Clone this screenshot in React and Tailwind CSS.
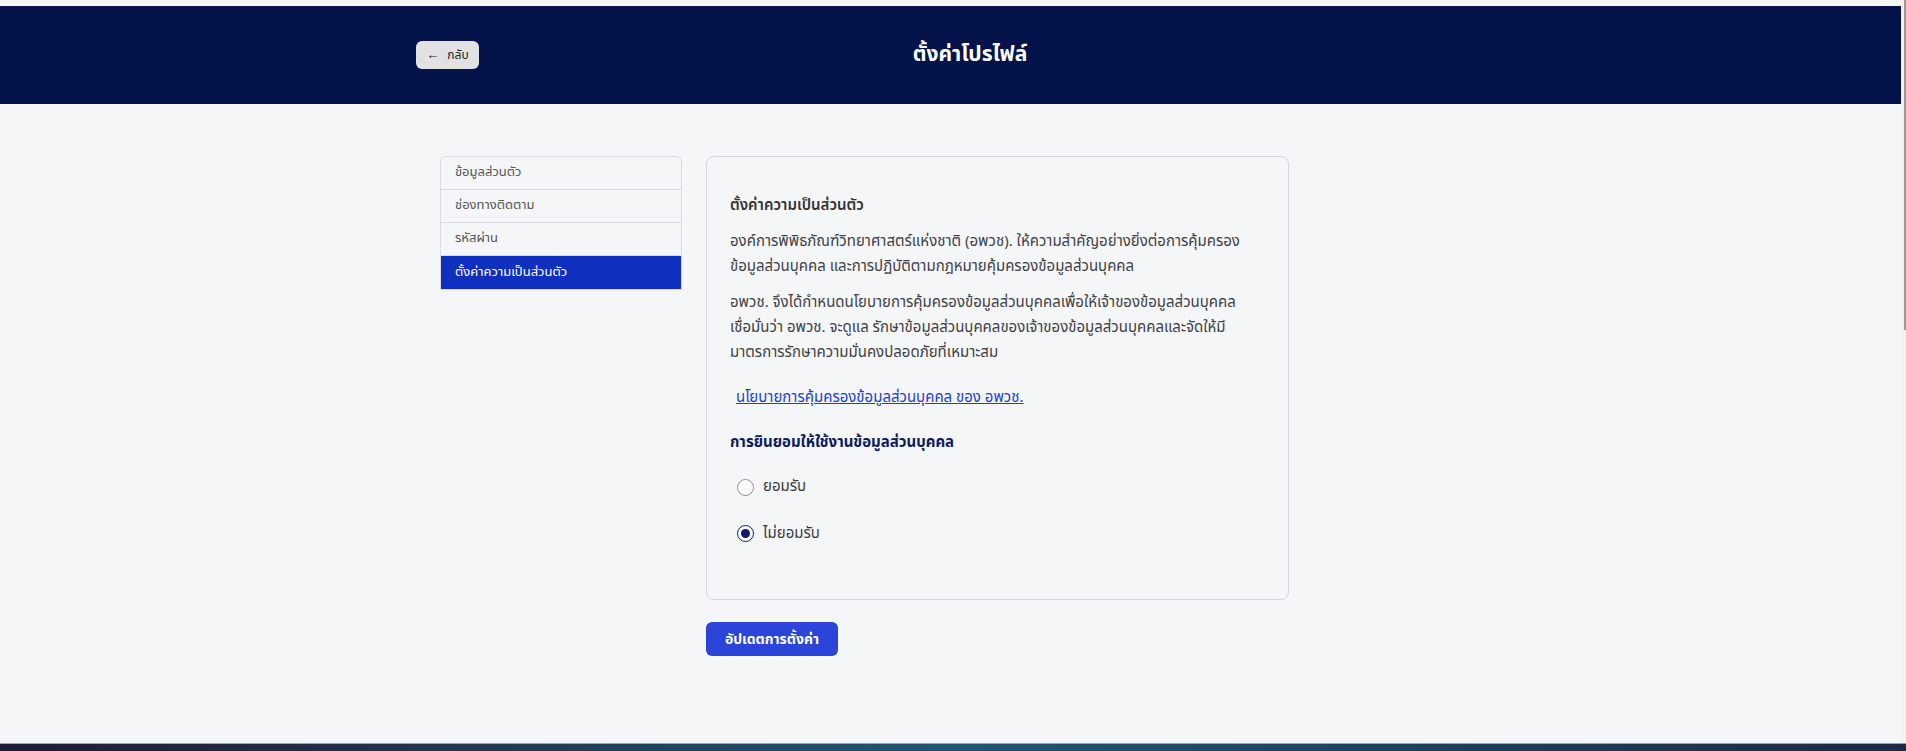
import React, { useState } from 'react';

const menuItems = [
  'ข้อมูลส่วนตัว',
  'ช่องทางติดตาม',
  'รหัสผ่าน',
  'ตั้งค่าความเป็นส่วนตัว',
];

const RadioOption = ({ label, checked, onChange }) => (
  <label className="flex items-center gap-[9px] pl-[7px] cursor-pointer">
    <span
      className={
        checked
          ? 'w-[17px] h-[17px] rounded-full border-[1.5px] border-[#0b1b6e] bg-white flex items-center justify-center'
          : 'w-[17px] h-[17px] rounded-full border border-[#8a8f99] bg-white'
      }
      onClick={onChange}
    >
      {checked && <span className="w-[9px] h-[9px] rounded-full bg-[#0b1b6e]" />}
    </span>
    <span className="text-[15px] text-[#3a3a40]" onClick={onChange}>{label}</span>
  </label>
);

const App = () => {
  const [active] = useState(3);
  const [consent, setConsent] = useState('no');

  return (
    <div className="h-[751px] flex flex-col bg-[#f5f6f8] font-['Noto_Sans_Thai','Noto_Sans',sans-serif] overflow-hidden">
      <div className="flex-1 flex">
        <div className="flex-1 flex flex-col">
          <div className="h-[6px]" />
          <header className="bg-[#041349] h-[98px]">
            <div className="w-[1069px] mx-auto h-full flex items-center">
              <button className="h-[28px] w-[63px] rounded-[6px] bg-[#e2e2e4] flex items-center justify-center gap-[8px] text-[12px] text-[#222]">
                <span className="text-[13px] leading-none">←</span>
                <span>กลับ</span>
              </button>
              <h1 className="flex-1 text-center text-[21px] font-bold text-white pr-[24px]">ตั้งค่าโปรไฟล์</h1>
            </div>
          </header>

          <main className="flex-1">
            <div className="w-[1069px] mx-auto px-[24px] pt-[52px] flex items-start gap-[24px]">
              {/* sidebar */}
              <nav className="w-[242px] border border-[#d9dbe0] rounded-t-[6px] overflow-hidden">
                {menuItems.map((item, i) => (
                  <div
                    key={item}
                    className={
                      i === active
                        ? 'h-[33px] px-[14px] flex items-center text-[13px] bg-[#0f2fbf] text-white'
                        : 'h-[33px] px-[14px] flex items-center text-[13px] text-[#555] border-b border-[#d9dbe0]'
                    }
                  >
                    {item}
                  </div>
                ))}
              </nav>

              {/* content */}
              <div className="w-[583px]">
                <section className="border border-[#d5d7dc] rounded-[8px] pt-[36px] px-[23px] pb-[54px]">
                  <h2 className="text-[15px] font-semibold text-[#333] leading-[25px]">ตั้งค่าความเป็นส่วนตัว</h2>
                  <p className="mt-[11px] text-[15px] leading-[25px] text-[#3f3f46]">
                    องค์การพิพิธภัณฑ์วิทยาศาสตร์แห่งชาติ (อพวช). ให้ความสำคัญอย่างยิ่งต่อการคุ้มครองข้อมูลส่วนบุคคล และการปฏิบัติตามกฎหมายคุ้มครองข้อมูลส่วนบุคคล
                  </p>
                  <p className="mt-[11px] text-[15px] leading-[25px] text-[#3f3f46]">
                    อพวช. จึงได้กำหนดนโยบายการคุ้มครองข้อมูลส่วนบุคคลเพื่อให้เจ้าของข้อมูลส่วนบุคคล<br />
                    เชื่อมั่นว่า อพวช. จะดูแล รักษาข้อมูลส่วนบุคคลของเจ้าของข้อมูลส่วนบุคคลและจัดให้มี<br />
                    มาตรการรักษาความมั่นคงปลอดภัยที่เหมาะสม
                  </p>
                  <a href="#" className="block mt-[20px] ml-[6px] text-[15px] leading-[25px] text-[#1d3fc9] underline">
                    นโยบายการคุ้มครองข้อมูลส่วนบุคคล ของ อพวช.
                  </a>
                  <h3 className="mt-[20px] text-[15px] font-bold leading-[25px] text-[#0b1b5e]">การยินยอมให้ใช้งานข้อมูลส่วนบุคคล</h3>
                  <div className="mt-[21px] flex flex-col gap-[24px]">
                    <RadioOption label="ยอมรับ" checked={consent === 'yes'} onChange={() => setConsent('yes')} />
                    <RadioOption label="ไม่ยอมรับ" checked={consent === 'no'} onChange={() => setConsent('no')} />
                  </div>
                </section>
                <button className="mt-[22px] h-[34px] w-[132px] rounded-[6px] bg-[#2b45d8] text-white text-[14px] font-bold">
                  อัปเดตการตั้งค่า
                </button>
              </div>
            </div>
          </main>
        </div>
        <div className="w-[5px] bg-[#f3f3f4] flex justify-end">
          <div className="w-[2px] h-[330px] bg-[#9a9a9a]" />
        </div>
      </div>
      <div className="h-[8px] border-t border-[#9aa0ad] bg-gradient-to-r from-[#1c1b33] via-[#1f5670] to-[#1c2a45]" />
    </div>
  );
};

export default App;
